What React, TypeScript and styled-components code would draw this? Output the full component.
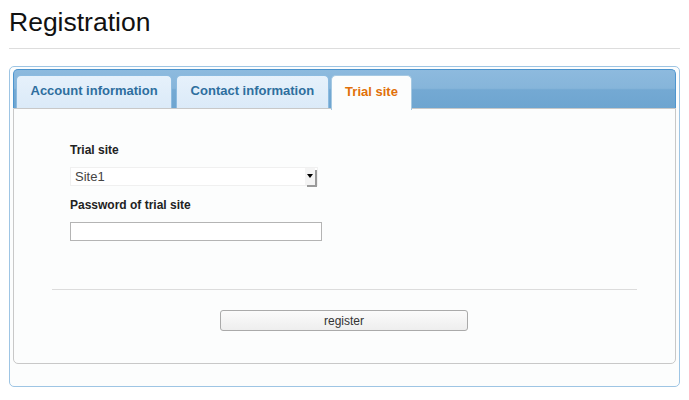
import React from "react";
import styled, { createGlobalStyle } from "styled-components";

const GlobalStyle = createGlobalStyle`
  body {
    margin: 0;
    background: #ffffff;
    font-family: "Liberation Sans", Arial, sans-serif;
  }
`;

const Page = styled.div`
  padding: 0 9px 0 9px;
`;

const Title = styled.h1`
  margin: 0;
  padding-top: 6px;
  font-size: 26.5px;
  font-weight: normal;
  line-height: 32px;
  color: #111;
`;

const Rule = styled.div`
  height: 1px;
  background: #dddddd;
  margin-top: 10px;
`;

const Box = styled.div`
  margin-top: 17px;
  border: 1px solid #9ec5e4;
  border-radius: 5px;
  background: #fcfdfd;
  padding: 2px 3px 23px 3px;
  height: 294px;
`;

const TabBar = styled.div`
  display: flex;
  gap: 4px;
  height: 33px;
  padding: 5px 0 0 2px;
  border: 1px solid #4d95cf;
  border-bottom: none;
  border-radius: 5px 5px 0 0;
  background: linear-gradient(
    to bottom,
    #8dbade 0%,
    #86b5da 48%,
    #74a9d3 52%,
    #6ea5d0 100%
  );
`;

const Tab = styled.div<{ $active?: boolean }>`
  display: flex;
  align-items: center;
  padding: 0 13.5px 3px;
  height: ${(p) => (p.$active ? "31px" : "29px")};
  margin-left: ${(p) => (p.$active ? "-2px" : "0")};
  border: 1px solid ${(p) => (p.$active ? "#a6c9e2" : "#8cbbe0")};
  border-bottom: none;
  border-radius: 5px 5px 0 0;
  background: ${(p) =>
    p.$active ? "#fcfdfd" : "linear-gradient(to bottom, #e6f1fb, #dbeaf8)"};
  color: ${(p) => (p.$active ? "#e17009" : "#2e6e9e")};
  font-size: 13px;
  font-weight: bold;
  position: relative;
  z-index: ${(p) => (p.$active ? 2 : 1)};
`;

const Panel = styled.div`
  position: relative;
  border: 1px solid #c8c8c8;
  border-radius: 0 0 5px 5px;
  background: #fcfdfd;
  height: 254px;
  padding: 0 38px;
  display: flex;
  flex-direction: column;
`;

const Form = styled.div`
  padding: 34px 0 0 18px;
  display: flex;
  flex-direction: column;
`;

const Label = styled.div<{ $top?: number }>`
  font-size: 12px;
  font-weight: bold;
  color: #222;
  line-height: 14px;
  margin-top: ${(p) => p.$top ?? 0}px;
`;

const SelectBox = styled.div`
  margin-top: 10px;
  width: 248px;
  height: 19px;
  display: flex;
  align-items: center;
  justify-content: space-between;
  background: #ffffff;
  border: 1px solid #f0f0f0;
  box-sizing: border-box;
  font-size: 13px;
  color: #444;
  padding-left: 4px;
`;

const Arrow = styled.div`
  width: 10px;
  height: 17px;
  background: #f4f4f4;
  box-shadow: 2px 2px 0 #9a9a9a;
  display: flex;
  align-items: center;
  justify-content: center;
  margin-right: 2px;
  margin-top: -1px;
`;

const TextInput = styled.div`
  margin-top: 10px;
  width: 252px;
  height: 19px;
  box-sizing: border-box;
  border: 1px solid #b4b4b4;
  background: #ffffff;
`;

const Divider = styled.div`
  height: 1px;
  background: #dcdcdc;
  margin-top: 48px;
`;

const ButtonRow = styled.div`
  display: flex;
  justify-content: center;
  margin-top: 20px;
`;

const Button = styled.button`
  width: 248px;
  height: 21px;
  border: 1px solid #aaaaaa;
  border-radius: 3px;
  background: linear-gradient(to bottom, #fbfbfb, #eeeeee);
  font-family: "Liberation Sans", Arial, sans-serif;
  font-size: 12px;
  color: #333;
  padding: 0;
  margin-right: 1px;
`;

export default function App() {
  return (
    <Page>
      <GlobalStyle />
      <Title>Registration</Title>
      <Rule />
      <Box>
        <TabBar>
          <Tab>Account information</Tab>
          <Tab>Contact information</Tab>
          <Tab $active>Trial site</Tab>
        </TabBar>
        <Panel>
          <Form>
            <Label>Trial site</Label>
            <SelectBox>
              <span>Site1</span>
              <Arrow>
                <svg width="6" height="4" viewBox="0 0 6 4">
                  <path d="M0 0 L6 0 L3 4 Z" fill="#000" />
                </svg>
              </Arrow>
            </SelectBox>
            <Label $top={12}>Password of trial site</Label>
            <TextInput />
          </Form>
          <Divider />
          <ButtonRow>
            <Button>register</Button>
          </ButtonRow>
        </Panel>
      </Box>
    </Page>
  );
}
